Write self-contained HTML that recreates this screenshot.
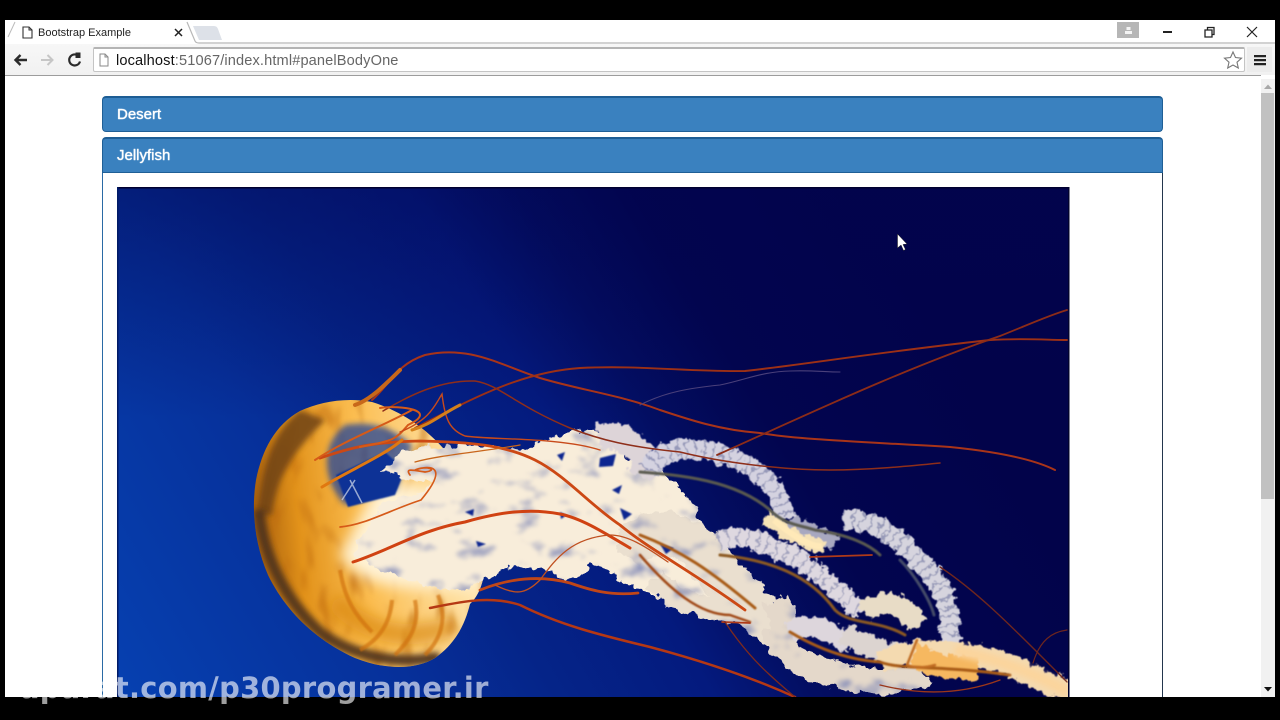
<!DOCTYPE html>
<html><head><meta charset="utf-8"><title>Bootstrap Example</title>
<style>
html,body{margin:0;padding:0;background:#000;width:1280px;height:720px;overflow:hidden}
#win{position:absolute;left:5px;top:20px;width:1270px;height:677px;background:#fff;overflow:hidden}
.abs{position:absolute}
.hd{position:absolute;left:102px;width:1061px;height:36px;box-sizing:border-box;background:#3a81bf;border:1px solid #1f5f96;border-top:2px solid #1d5d94;color:#fff;font:15px/33px "Liberation Sans",sans-serif;padding-left:14px;text-shadow:0 0 1px #fff;-webkit-text-stroke:.2px #fff}
svg{position:absolute;left:0;top:0}
</style></head><body>
<div id="win"></div>
<div class="abs" style="left:5px;top:75px;width:1256px;height:1px;background:#9c9c9c"></div>
<div class="abs" style="left:5px;top:44px;width:1270px;height:31px;background:linear-gradient(#f7f7f7,#f1f1f1)"></div>
<div class="abs" style="left:93px;top:47px;width:1152px;height:25px;box-sizing:border-box;background:#fff;border:1px solid #c4c4c4;border-top:2px solid #b4b4b4;border-radius:2px"></div>
<div class="abs" style="left:1247px;top:47px;width:25px;height:25px;background:#ececec"></div>
<div class="abs" style="left:116px;top:51px;font:14.6px/18px 'Liberation Sans',sans-serif;color:#666;white-space:nowrap;letter-spacing:.13px;padding-top:1px"><span style="color:#111">localhost</span>:51067/index.html#panelBodyOne</div>

<div class="hd" style="top:96px;border-radius:4px">Desert</div>
<div class="hd" style="top:137px;border-radius:4px 4px 0 0">Jellyfish</div>
<div class="abs" style="left:102px;top:173px;width:1061px;height:524px;box-sizing:border-box;border-left:1px solid #2a6aa5;border-right:1px solid #23364d"></div>

<!-- scrollbar -->
<div class="abs" style="left:1261px;top:79px;width:14px;height:618px;background:#f1f1f1"></div>
<div class="abs" style="left:1261px;top:93px;width:13px;height:406px;background:#c1c1c1"></div>

<svg width="1280" height="720" viewBox="0 0 1280 720">
<defs>
<clipPath id="ic"><rect x="118" y="188" width="951" height="509"/></clipPath>
<clipPath id="bc"><path d="M372 402C345 397 320 402 300 411C275 425 262 450 256 480C251 510 255 545 268 575C285 610 315 640 355 658C385 670 415 670 435 658C458 642 466 620 470 604C485 590 490 560 480 520C470 470 430 420 372 402Z"/></clipPath>
<linearGradient id="bg" gradientUnits="userSpaceOnUse" x1="117" y1="680" x2="880" y2="230">
<stop offset="0" stop-color="#0640b0"/><stop offset=".28" stop-color="#06309a"/><stop offset=".42" stop-color="#052488"/><stop offset=".57" stop-color="#041a7e"/><stop offset=".67" stop-color="#030e62"/><stop offset=".78" stop-color="#02054f"/><stop offset="1" stop-color="#02034a"/>
</linearGradient>
<linearGradient id="tp" gradientUnits="userSpaceOnUse" x1="0" y1="187" x2="0" y2="420"><stop offset="0" stop-color="#02044f" stop-opacity=".42"/><stop offset="1" stop-color="#02044f" stop-opacity="0"/></linearGradient>
<linearGradient id="bell" gradientUnits="userSpaceOnUse" x1="255" y1="520" x2="470" y2="500"><stop offset="0" stop-color="#a8600e"/><stop offset=".2" stop-color="#e2921a"/><stop offset=".5" stop-color="#fbbd50"/><stop offset="1" stop-color="#ffe6b0"/></linearGradient>
<filter id="tex" filterUnits="userSpaceOnUse" x="330" y="410" width="760" height="300" color-interpolation-filters="sRGB">
<feTurbulence type="fractalNoise" baseFrequency=".09" numOctaves="3" seed="4" result="n"/>
<feDisplacementMap in="SourceGraphic" in2="n" scale="13" xChannelSelector="R" yChannelSelector="G" result="d"/>
<feTurbulence type="fractalNoise" baseFrequency=".035 .05" numOctaves="3" seed="11" result="n2"/>
<feColorMatrix in="n2" type="matrix" values="0 0 0 0 .52  0 0 0 0 .55  0 0 0 0 .72  3.2 0 0 0 -1.85" result="sh0"/>
<feGaussianBlur in="sh0" stdDeviation="1.500" result="sh"/>
<feComposite in="sh" in2="d" operator="in" result="s"/>
<feMerge><feMergeNode in="d"/><feMergeNode in="s"/></feMerge>
</filter>
<filter id="r2" filterUnits="userSpaceOnUse" x="580" y="410" width="510" height="300">
<feTurbulence type="fractalNoise" baseFrequency=".14" numOctaves="3" seed="8"/><feDisplacementMap in="SourceGraphic" scale="12" xChannelSelector="R" yChannelSelector="G"/><feGaussianBlur stdDeviation=".5"/>
</filter>
<filter id="b1" filterUnits="userSpaceOnUse" x="100" y="180" width="1000" height="540"><feGaussianBlur stdDeviation=".8"/></filter>
<filter id="b3" filterUnits="userSpaceOnUse" x="100" y="180" width="1000" height="540"><feGaussianBlur stdDeviation="3"/></filter>
<filter id="b6" filterUnits="userSpaceOnUse" x="100" y="180" width="1000" height="540"><feGaussianBlur stdDeviation="7"/></filter>
<filter id="mot" filterUnits="userSpaceOnUse" x="240" y="390" width="250" height="290" color-interpolation-filters="sRGB">
<feTurbulence type="fractalNoise" baseFrequency=".06 .025" numOctaves="2" seed="5" result="n"/>
<feColorMatrix in="n" type="matrix" values="0 0 0 0 .75  0 0 0 0 .42  0 0 0 0 .06  2.2 0 0 0 -1.2" result="sh0"/>
<feGaussianBlur in="sh0" stdDeviation="1.500" result="sh1"/>
<feComposite in="sh1" in2="SourceAlpha" operator="in" result="s"/>
<feMerge><feMergeNode in="SourceGraphic"/><feMergeNode in="s"/></feMerge>
</filter>
</defs>

<g clip-path="url(#ic)">
<rect x="117" y="187" width="953" height="510" fill="url(#bg)"/>
<rect x="117" y="187" width="953" height="240" fill="url(#tp)"/>

<!-- bell -->
<path filter="url(#mot)" d="M372 402C345 397 320 402 300 411C275 425 262 450 256 480C251 510 255 545 268 575C285 610 315 640 355 658C385 670 415 670 435 658C458 642 466 620 470 604C485 590 490 560 480 520C470 470 430 420 372 402Z" fill="url(#bell)"/>
<g clip-path="url(#bc)">
<path d="M300 410C280 425 268 450 262 480L256 515L272 515C276 480 290 455 325 420Z" fill="#6e4316" opacity=".85" filter="url(#b3)"/>
<path d="M259 510C263 555 285 600 320 632C350 655 395 666 440 657" fill="none" stroke="#4e321a" stroke-width="11" opacity=".9" filter="url(#b3)"/>
<path d="M335 600C360 630 405 645 455 625" fill="none" stroke="#d8860e" stroke-width="20" opacity=".7" filter="url(#b6)"/>
<path d="M340 555C365 595 425 590 480 588L490 500L380 480Z" fill="#fff2d4" filter="url(#b6)"/>
<path d="M345 425C375 420 395 430 412 445L396 490L345 505C322 480 320 445 345 425Z" fill="#23459a" opacity=".75" filter="url(#b3)"/>
<path d="M336 475L348 507L395 495L405 470L385 452Z" fill="#0d3296" filter="url(#b1)"/>
<path d="M350 480L362 503M342 500L355 480" stroke="#d5dcec" stroke-width="1.500" opacity=".7"/>
<path d="M392 600C390 625 378 640 360 650M415 600C420 625 410 640 395 655M438 595C448 620 440 640 425 655M340 570C345 600 355 615 372 632" stroke="#cf7008" stroke-width="4" fill="none" opacity=".65" filter="url(#b1)"/>
</g>

<!-- white central mass and lobes -->
<g filter="url(#tex)">
<path d="M382 470C395 462 392 450 412 449C450 444 490 444 525 450C545 440 565 430 590 432C610 432 625 445 628 458C660 462 700 500 705 535C725 565 745 585 760 610C745 615 720 618 700 610C675 605 660 600 640 590C625 585 612 570 590 562C585 575 570 588 558 576C540 565 520 570 505 566C490 575 480 590 460 590C420 590 380 570 352 555C365 530 375 505 395 498C410 495 425 495 430 482C415 478 395 480 382 470Z" fill="#f8edda"/>
<path d="M640 540C665 525 690 540 705 555C730 585 750 610 780 630" stroke="#eadfcf" stroke-width="44" fill="none" stroke-linecap="round"/>
<path d="M655 580C680 605 710 610 750 610" stroke="#eadfcf" stroke-width="24" fill="none"/>
<path d="M775 628C775 650 800 665 840 675C880 688 905 680 925 672" stroke="#e4d8ca" stroke-width="26" fill="none"/>
<path d="M775 600L790 640" stroke="#e4d8ca" stroke-width="28" fill="none"/>
</g>
<g fill="#0c2790" filter="url(#b1)">
<path d="M465 512l9 -3 -1 7zM476 541l10 3 -8 3zM557 455l8 -3 -3 9zM612 490l10 -5 -3 9zM560 512l7 3 -6 4zM600 458l16 -4 -3 12 -14 1zM620 508l12 6 -8 6zM660 544l14 4 -8 6z"/>
</g>

<!-- ruffled ribbons -->
<g fill="none" stroke-linecap="butt" filter="url(#r2)">
<path d="M598 438C625 428 650 455 640 476" stroke="#ddd4d8" stroke-width="26"/>
<path d="M648 470C665 445 690 446 715 452C750 462 780 482 785 518" stroke="#d4d2e0" stroke-width="20"/>
<path d="M648 470C665 445 690 446 715 452C750 462 780 482 785 518" stroke="#3a4480" stroke-width="20" stroke-dasharray="2 7" opacity=".4"/>
<path d="M843 520C875 518 900 540 925 565C945 590 953 612 950 642" stroke="#d6d4de" stroke-width="20"/>
<path d="M843 520C875 518 900 540 925 565C945 590 953 612 950 642" stroke="#3a4480" stroke-width="20" stroke-dasharray="2 7" opacity=".4"/>
<path d="M718 542C745 530 770 545 800 560C825 580 850 600 860 612" stroke="#ded8e0" stroke-width="19"/>
<path d="M718 542C745 530 770 545 800 560C825 580 850 600 860 612" stroke="#3a4480" stroke-width="19" stroke-dasharray="2 8" opacity=".35"/>
<path d="M865 612C885 595 905 605 918 625" stroke="#e8dcc6" stroke-width="22"/>
<path d="M790 630C810 620 830 630 850 645" stroke="#ddd6dc" stroke-width="20"/>
<path d="M843 635C880 650 895 660 920 650" stroke="#dcd4d0" stroke-width="22"/>
<path d="M790 522L835 543" stroke="#a8a8c0" stroke-width="16"/>
<path d="M765 518C785 530 805 545 825 548" stroke="#f6e2b6" stroke-width="14"/>
<path d="M880 662C920 645 950 652 985 657C1015 665 1040 680 1075 695" stroke="#f4dab0" stroke-width="22"/>
<path d="M912 655C930 662 950 670 978 668" stroke="#f6b860" stroke-width="24"/>
</g>
<path d="M774 520C785 530 810 548 822 546" stroke="#ffe9b8" stroke-width="6" fill="none" filter="url(#b1)"/>
<!-- dark inner stripes of ribbons -->
<g fill="none" stroke-linecap="round" filter="url(#b1)">
<path d="M640 472C680 475 735 480 770 510C785 525 800 525 815 530C850 535 870 545 880 555" stroke="#5a5a50" stroke-width="3"/>
<path d="M900 560C915 575 930 600 934 615" stroke="#454c68" stroke-width="3"/>
<path d="M720 555C770 560 810 575 835 610C850 625 880 620 905 635" stroke="#8c5a20" stroke-width="3"/>
<path d="M640 535C680 550 710 570 755 608M790 632C820 650 850 660 880 662C900 670 940 665 1010 675" stroke="#a85c18" stroke-width="3"/>
<path d="M640 555C670 590 700 615 730 615M730 615L750 622" stroke="#a04a14" stroke-width="2.500"/>
<path d="M917 640L907 665C915 668 925 668 935 665" stroke="#c06c20" stroke-width="2.500"/>
</g>

<!-- tentacles -->
<g fill="none" stroke-linecap="round">
<path d="M372 400C390 385 395 365 425 355C470 345 500 365 540 378C580 390 620 395 660 410C690 420 720 430 760 433C800 440 870 442 950 447C1000 452 1035 460 1055 470" stroke="#a83419" stroke-width="2"/>
<path d="M415 428C470 400 520 372 580 368C640 365 690 372 745 371C800 365 880 352 990 340C1020 338 1050 340 1067 340" stroke="#9c3016" stroke-width="1.900"/>
<path d="M383 411C410 395 440 380 475 381C500 385 515 405 570 428C600 440 630 447 680 452C720 462 780 470 830 470C870 470 910 466 940 463" stroke="#8e2e1a" stroke-width="1.500"/>
<path d="M717 455C800 418 900 370 1000 336C1030 324 1050 315 1067 310" stroke="#8c2c18" stroke-width="1.800"/>
<path d="M640 405C665 392 690 388 720 385C745 380 760 372 790 371C810 370 825 372 840 372" stroke="#4a407a" stroke-width="1.100"/>
<path d="M320 458C350 448 370 442 420 441C470 442 505 445 535 460C565 475 590 505 620 525C650 550 690 570 745 610" stroke="#cc4814" stroke-width="2.800"/>
<path d="M353 562C390 550 420 530 465 522C500 512 530 508 560 514C580 518 600 530 630 548" stroke="#d04212" stroke-width="3"/>
<path d="M430 608C460 602 490 595 520 605C560 625 600 635 650 647C680 655 740 672 795 697" stroke="#b53814" stroke-width="2.500"/>
<path d="M480 590C510 578 540 575 570 583C590 590 610 596 638 593" stroke="#c04618" stroke-width="2.800"/>
<path d="M495 585C515 595 525 595 540 580C555 560 570 538 610 535C630 535 650 550 668 562" stroke="#c05020" stroke-width="1.300"/>
<path d="M380 408C400 405 440 410 408 425C395 440 395 440 360 447M315 460C345 440 385 425 412 410" stroke="#d65a18" stroke-width="2"/>
<path d="M400 432C430 420 435 405 442 394C445 420 450 430 465 436C490 440 560 437 600 450" stroke="#c84a1a" stroke-width="1.400"/>
<path d="M410 475C405 468 412 470 425 472C440 470 425 465 415 470C430 465 450 465 421 500C390 510 365 525 340 527" stroke="#d65a18" stroke-width="1.700"/>
<path d="M322 487C350 470 385 455 402 440" stroke="#e07810" stroke-width="3"/>
<path d="M415 462C440 455 480 452 520 445" stroke="#c8651a" stroke-width="1.300"/>
<path d="M412 430C430 425 440 415 460 405" stroke="#d5801a" stroke-width="3"/>
<path d="M355 405C370 400 385 385 400 370" stroke="#c8681a" stroke-width="4"/>
<path d="M940 567C975 590 1010 625 1040 655C1050 665 1060 675 1067 682" stroke="#6e261e" stroke-width="1.400"/>
<path d="M1033 663C1040 640 1052 632 1067 630" stroke="#6e261e" stroke-width="1.200"/>
<path d="M722 622L750 623M810 557L872 555" stroke="#b03a18" stroke-width="1.700"/>
<path d="M725 622C750 660 775 680 795 697" stroke="#7d2a1e" stroke-width="1.300"/>
<path d="M880 685C920 695 960 695 1000 680" stroke="#9a361a" stroke-width="1.300"/>
</g>
<path d="M955 650C980 656 1020 665 1068 692" stroke="#fbd49c" stroke-width="11" fill="none" filter="url(#b3)"/>
</g>

<rect x="117" y="187" width="952" height="1.500" fill="#000030"/>
<rect x="117" y="187" width="1.500" height="510" fill="#001a66"/>
<rect x="1068" y="187" width="1.500" height="510" fill="#02032e"/>

<!-- cursor -->
<path d="M897.500 234V248L901 245L903.500 250.500L905.500 249.500L903 244.500L907 244Z" fill="#fff" stroke="#222" stroke-width=".5"/>

<!-- tab strip -->
<path d="M5 43H197L187 22H18L9 40" fill="#fff"/>
<path d="M8 37L15 22" stroke="#bbb" fill="none"/>
<path d="M187 22L195 41Q196 43 199 43H1275" stroke="#b8b8b8" stroke-width="1.200" fill="none"/>
<path d="M193 26H214Q217 26 218 29L222 40H199Z" fill="#dde1e8"/>
<path d="M23 27H29L32 30V38H23Z" fill="#fff" stroke="#333" stroke-width="1.100"/>
<path d="M29 27V30H32" fill="none" stroke="#333"/>
<text x="38" y="36" font-family="'Liberation Sans',sans-serif" font-size="11" fill="#222">Bootstrap Example</text>
<path d="M175 29L182 36M182 29L175 36" stroke="#222" stroke-width="1.500"/>
<!-- win buttons -->
<rect x="1117" y="22" width="22" height="16" fill="#b6b6b6"/>
<path d="M1125 34V31H1132V34ZM1126.500 27H1130.500V30H1126.500Z" fill="#f4f4f4"/>
<rect x="1163" y="31" width="9" height="2" fill="#222"/>
<path d="M1205 30H1212V37H1205ZM1207.500 30V27.500H1214V34.500H1212" fill="none" stroke="#222" stroke-width="1.300"/>
<path d="M1247 27L1257 37M1257 27L1247 37" stroke="#222" stroke-width="1.200"/>
<!-- toolbar icons -->
<path d="M27 60H16M20.500 55L15.500 60L20.500 65" fill="none" stroke="#2b2b2b" stroke-width="2.400"/>
<path d="M41 60H52M47.500 55L52.500 60L47.500 65" fill="none" stroke="#c6c6c6" stroke-width="2"/>
<path d="M79 56.500A5.500 5.500 0 1 0 80 61.500" fill="none" stroke="#2b2b2b" stroke-width="2.200"/>
<path d="M75.500 52.500H80.500V58H75.500Z" fill="#2b2b2b"/>
<path d="M100 54H105L108 57V66H100Z" fill="#fff" stroke="#8a8a8a"/>
<path d="M105 54V57H108" fill="none" stroke="#8a8a8a"/>
<path d="M1233 52L1235.500 57.500L1241.500 58.200L1237 62.200L1238.300 68L1233 65L1227.700 68L1229 62.200L1224.500 58.200L1230.500 57.500Z" fill="#fff" stroke="#777" stroke-width="1.100"/>
<path d="M1254 55H1266V57.200H1254ZM1254 59H1266V61.200H1254ZM1254 63H1266V65.200H1254Z" fill="#222"/>
<!-- scrollbar arrows -->
<path d="M1264 89L1268 84.500L1272 89Z" fill="#a8a8a8"/>
<path d="M1264 687H1272L1268 691.500Z" fill="#111"/>
<!-- watermark -->
<text x="20" y="698" font-family="'DejaVu Sans',sans-serif" font-weight="700" font-size="28.900" fill="#fff" fill-opacity=".62" letter-spacing=".3">aparat.com/p30programer.ir</text>
</svg>
</body></html>
